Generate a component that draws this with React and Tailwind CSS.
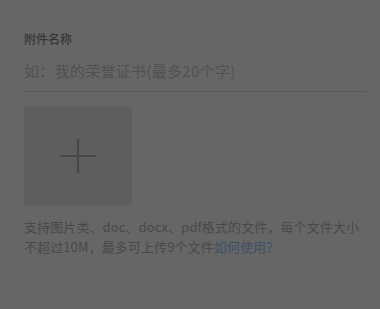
export default function App() {
  return (
    <div
      className="w-[380px] h-[309px] bg-[#666666] pl-6 pt-[31px] overflow-hidden"
      style={{ fontFamily: '"Noto Sans CJK SC", "Noto Sans", sans-serif' }}
    >
      <div className="text-[12px] leading-[16px] font-medium text-[#363636]">附件名称</div>

      <div className="mt-[13px] w-[343px] border-b border-[#5b5b5b] pb-[9px]">
        <div className="text-[15px] leading-[22px] tracking-[0.3px] text-[#515151]">
          如：我的荣誉证书(最多20个字)
        </div>
      </div>

      <div className="mt-[15px] w-[108px] h-[98px] bg-[#5e5e5e] flex items-center justify-center">
        <svg width="36" height="34" viewBox="0 0 36 34">
          <path d="M0 17H36M18 0V34" stroke="#474747" strokeWidth="2" fill="none" />
        </svg>
      </div>

      <p className="mt-[12px] w-[345px] text-[13px] leading-[20px] tracking-[0.1px] text-[#494949]">
        支持图片类、doc、docx、pdf格式的文件，每个文件大小不超过10M，最多可上传9个文件<span className="text-[#3e4f68]">如何使用？</span>
      </p>
    </div>
  )
}
